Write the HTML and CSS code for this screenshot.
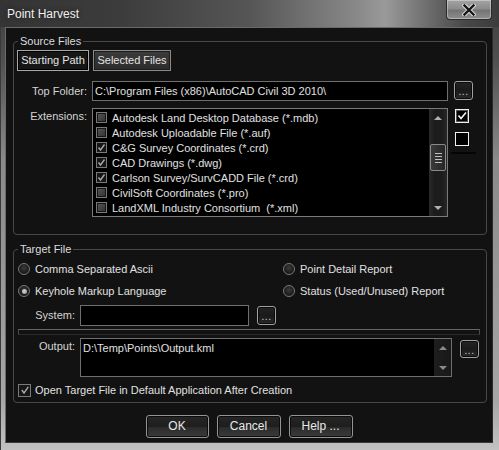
FILE: index.html
```html
<!DOCTYPE html>
<html>
<head>
<meta charset="utf-8">
<title>Point Harvest</title>
<link rel="stylesheet" href="styles.css">
</head>
<body>
<div class="window">
  <div class="titlebar">
    <span class="title">Point Harvest</span>
    <div class="close">
      <svg width="14" height="12" viewBox="0 0 14 12">
        <path d="M2.5 1.5 L11.5 10.5 M11.5 1.5 L2.5 10.5" stroke="#dcdcdc" stroke-width="4.4" stroke-linecap="square" fill="none"/>
        <path d="M2.5 1.5 L11.5 10.5 M11.5 1.5 L2.5 10.5" stroke="#151515" stroke-width="2.4" stroke-linecap="square" fill="none"/>
      </svg>
    </div>
  </div>
  <div class="client">
    <div class="group source">
      <div class="legend">Source Files</div>
      <div class="tabs">
        <div class="tab active">Starting Path</div>
        <div class="tab">Selected Files</div>
      </div>
      <div class="row folder-row">
        <div class="label">Top Folder:</div>
        <div class="textbox folder">C:\Program Files (x86)\AutoCAD Civil 3D 2010\</div>
        <div class="browse">...</div>
      </div>
      <div class="row ext-row">
        <div class="label ext-label">Extensions:</div>
        <div class="listbox">
          <div class="items">
            <div class="item"><span class="cb"></span>Autodesk Land Desktop Database (*.mdb)</div>
            <div class="item"><span class="cb"></span>Autodesk Uploadable File (*.auf)</div>
            <div class="item"><span class="cb on"><svg width="9" height="9" viewBox="0 0 9 9"><path d="M1.5 4.5 L3.5 7 L7.5 1.5" stroke="#a8a8a8" stroke-width="1.4" fill="none"/></svg></span>C&amp;G Survey Coordinates (*.crd)</div>
            <div class="item"><span class="cb on"><svg width="9" height="9" viewBox="0 0 9 9"><path d="M1.5 4.5 L3.5 7 L7.5 1.5" stroke="#a8a8a8" stroke-width="1.4" fill="none"/></svg></span>CAD Drawings (*.dwg)</div>
            <div class="item"><span class="cb on"><svg width="9" height="9" viewBox="0 0 9 9"><path d="M1.5 4.5 L3.5 7 L7.5 1.5" stroke="#a8a8a8" stroke-width="1.4" fill="none"/></svg></span>Carlson Survey/SurvCADD File (*.crd)</div>
            <div class="item"><span class="cb"></span>CivilSoft Coordinates (*.pro)</div>
            <div class="item"><span class="cb"></span>LandXML Industry Consortium&nbsp; (*.xml)</div>
          </div>
          <div class="vscroll">
            <div class="arrowbox"><span class="arrow up"></span></div>
            <div class="thumb"><i></i><i></i><i></i><i></i></div>
            <div class="spacer"></div>
            <div class="arrowbox"><span class="arrow down"></span></div>
          </div>
        </div>
        <div class="side">
          <div class="bigcb"><svg width="12" height="12" viewBox="0 0 12 12"><path d="M2.5 5.5 L5 8.5 L10 2.5" stroke="#f4f4f4" stroke-width="1.6" fill="none"/></svg></div>
          <div class="bigcb second"></div>
          <div class="sideline"></div>
        </div>
      </div>
    </div>

    <div class="group target">
      <div class="legend">Target File</div>
      <div class="radios">
        <div class="opt"><span class="radio"></span>Comma Separated Ascii</div>
        <div class="opt"><span class="radio"></span>Point Detail Report</div>
        <div class="opt"><span class="radio sel"><i></i></span>Keyhole Markup Language</div>
        <div class="opt"><span class="radio"></span>Status (Used/Unused) Report</div>
      </div>
      <div class="row system-row">
        <div class="label short">System:</div>
        <div class="textbox system"></div>
        <div class="browse sys-browse">...</div>
      </div>
      <div class="separator"></div>
      <div class="row output-row">
        <div class="label short out-label">Output:</div>
        <div class="textarea">
          <div class="ta-text">D:\Temp\Points\Output.kml</div>
          <div class="vscroll small">
            <div class="arrowbox"><span class="arrow up dim"></span></div>
            <div class="arrowbox"><span class="arrow down dim"></span></div>
          </div>
        </div>
        <div class="browse out-browse">...</div>
      </div>
      <div class="check-row">
        <span class="cb big on"><svg width="10" height="10" viewBox="0 0 10 10"><path d="M1.8 5 L4 8 L8.3 1.8" stroke="#a8a8a8" stroke-width="1.4" fill="none"/></svg></span>Open Target File in Default Application After Creation
      </div>
    </div>

    <div class="buttons">
      <div class="btn ok">OK</div>
      <div class="btn">Cancel</div>
      <div class="btn">Help ...</div>
    </div>
  </div>
</div>
</body>
</html>
```

FILE: styles.css
```css
* { box-sizing: border-box; }
html, body { margin: 0; padding: 0; }
body {
  width: 499px;
  height: 450px;
  overflow: hidden;
  background: #9a9a9a;
  font-family: "Liberation Sans", Arial, sans-serif;
  font-size: 11px;
  color: #dcdcdc;
}
.window {
  width: 499px;
  height: 450px;
  display: flex;
  flex-direction: column;
  border-left: 1px solid #3a3a3a;
  background: linear-gradient(to bottom, #3c3c3c 0px, #505050 60px, #8a8a8a 160px, #a6a6a6 400px, #c2c2c2 450px);
}
.titlebar {
  height: 27px;
  flex: none;
  display: flex;
  align-items: flex-start;
  margin-left: -1px;
  background: linear-gradient(to right, #343434 0px, #3c3c3c 120px, #565656 250px, #8a8a8a 360px, #9a9a9a 385px, #707070 425px, #484848 465px, #3c3c3c 499px);
}
.title {
  padding-left: 7px;
  line-height: 28px;
  font-size: 12px;
  color: #f0f0f0;
  text-shadow: 0 0 4px rgba(0,0,0,0.5);
}
.close {
  margin-left: auto;
  margin-right: 7px;
  width: 46px;
  height: 20px;
  border: 1px solid #2a2a2a;
  border-top: none;
  border-radius: 0 0 4px 4px;
  background: linear-gradient(to bottom, #a4a4a4 0%, #8c8c8c 45%, #747474 55%, #8e8e8e 100%);
  box-shadow: inset 0 0 0 1px rgba(255,255,255,0.35);
  display: flex;
  align-items: center;
  justify-content: center;
  padding-top: 1px;
}
.client {
  flex: none;
  margin: 0 6px 0 4px;
  height: 416px;
  border: 1px solid #6a6a6a;
  border-right-color: #2a2a2a;
  border-bottom-color: #3a3a3a;
  background: #121212;
  display: flex;
  flex-direction: column;
}
.group {
  border: 1px solid #484848;
  border-radius: 4px;
  margin: 0 5px 0 7px;
}
.source { margin-top: 13px; padding-bottom: 17px; }
.target { margin-top: 14px; padding-bottom: 3px; }
.legend {
  margin: -8px 0 0 4px;
  padding: 0 2px;
  width: max-content;
  background: #121212;
  line-height: 15px;
  color: #dcdcdc;
}
.tabs {
  display: flex;
  gap: 4px;
  margin: 1px 0 0 3px;
}
.tab {
  height: 21px;
  line-height: 19px;
  text-align: center;
  border: 1px solid #8a8a8a;
  background: linear-gradient(to bottom, #3c3c3c, #2c2c2c);
  box-shadow: inset 0 0 0 1px #1c1c1c;
  width: 78px;
  color: #e4e4e4;
}
.tab.active {
  width: 72px;
  border-color: #a8a8a8;
  background: #161616;
  box-shadow: inset 0 0 0 1px #000;
}
.row { display: flex; align-items: flex-start; }
.label {
  flex: none;
  width: 73px;
  text-align: right;
  color: #d4d4d4;
  line-height: 20px;
}
.label.short { width: 61px; }
.folder-row { margin-top: 10px; }
.textbox {
  flex: none;
  margin-left: 5px;
  height: 20px;
  border: 1px solid #6e6e6e;
  background: #000;
  padding-left: 2px;
  line-height: 18px;
  color: #e0e0e0;
  white-space: nowrap;
  overflow: hidden;
}
.textbox.folder { width: 356px; }
.browse {
  flex: none;
  margin-left: 6px;
  width: 19px;
  height: 19px;
  border: 1px solid #a0a0a0;
  border-radius: 3px;
  background: linear-gradient(to bottom, #242424, #1a1a1a 50%, #2a2a2a);
  box-shadow: inset 0 0 0 1px #0a0a0a;
  color: #d0d0d0;
  font-size: 10px;
  line-height: 20px;
  text-align: center;
  letter-spacing: 0.5px;
}
.ext-row { margin-top: 7px; }
.ext-label { line-height: 17px; }
.listbox {
  flex: none;
  margin-left: 5px;
  width: 356px;
  height: 109px;
  border: 1px solid #7a7a7a;
  background: #000;
  display: flex;
}
.items {
  flex: 1;
  padding-top: 1px;
}
.item {
  height: 15px;
  display: flex;
  align-items: center;
  padding-left: 3px;
  white-space: nowrap;
  color: #e0e0e0;
}
.cb {
  flex: none;
  width: 11px;
  height: 11px;
  margin-right: 5px;
  border: 1px solid #7a7a7a;
  background: #161616;
  display: flex;
  align-items: center;
  justify-content: center;
}
.cb:not(.on)::after {
  content: "";
  width: 7px;
  height: 7px;
  background: linear-gradient(to bottom right, #555, #333);
}
.cb.big { width: 13px; height: 13px; margin-right: 4px; }
.vscroll {
  flex: none;
  width: 18px;
  display: flex;
  flex-direction: column;
  background: linear-gradient(to right, #2a2a2a, #1c1c1c 30%, #1c1c1c 70%, #262626);
}
.arrowbox {
  height: 17px;
  display: flex;
  align-items: center;
  justify-content: center;
}
.arrow {
  width: 0;
  height: 0;
  border-left: 4px solid transparent;
  border-right: 4px solid transparent;
}
.arrow.up { border-bottom: 4px solid #b0b0b0; }
.arrow.down { border-top: 4px solid #b0b0b0; }
.arrow.dim.up { border-bottom-color: #8a8a8a; }
.arrow.dim.down { border-top-color: #8a8a8a; }
.thumb {
  margin: 18px 1px 0 1px;
  height: 27px;
  border: 1px solid #8a8a8a;
  border-radius: 2px;
  background: linear-gradient(to right, #3a3a3a, #262626);
  display: flex;
  flex-direction: column;
  align-items: center;
  justify-content: center;
  gap: 2px;
}
.thumb i {
  display: block;
  width: 7px;
  height: 1px;
  background: #c0c0c0;
}
.spacer { flex: 1; }
.side {
  flex: none;
  margin-left: 3px;
  width: 25px;
}
.bigcb {
  margin: 1px 0 0 4px;
  width: 14px;
  height: 14px;
  border: 1px solid #f0f0f0;
  box-shadow: inset 0 0 0 1px #555;
  background: #000;
  display: flex;
  align-items: center;
  justify-content: center;
}
.bigcb.second { margin-top: 9px; box-shadow: none; }
.sideline {
  margin-top: 6px;
  height: 2px;
  background: #050505;
}
.radios {
  margin-top: 1px;
  display: grid;
  grid-template-columns: 269px 1fr;
}
.opt {
  height: 22px;
  display: flex;
  align-items: center;
  padding-left: 4px;
  color: #e0e0e0;
  white-space: nowrap;
}
.opt:nth-child(even) { padding-left: 0; }
.radio {
  flex: none;
  width: 12px;
  height: 12px;
  margin-right: 5px;
  border-radius: 50%;
  border: 1px solid #7a7a7a;
  background: radial-gradient(circle at 50% 40%, #3c3c3c, #181818 70%);
  display: flex;
  align-items: center;
  justify-content: center;
}
.radio i {
  display: block;
  width: 5px;
  height: 5px;
  border-radius: 50%;
  background: radial-gradient(circle at 40% 35%, #d8d8d8, #8a8a8a);
}
.system-row { margin-top: 3px; }
.textbox.system { width: 169px; height: 21px; }
.sys-browse { margin-left: 8px; margin-top: 1px; }
.separator {
  margin: 3px 6px 0 4px;
  height: 6px;
  border: 1px solid #4a4a4a;
  border-top-color: #666;
  border-bottom-color: #2a2a2a;
}
.output-row { margin-top: 3px; }
.out-label { line-height: 16px; }
.textarea {
  flex: none;
  margin-left: 5px;
  width: 372px;
  height: 39px;
  border: 1px solid #6e6e6e;
  background: #000;
  display: flex;
}
.ta-text {
  flex: 1;
  padding: 2px 0 0 2px;
  line-height: 15px;
  color: #e0e0e0;
}
.vscroll.small {
  width: 17px;
  justify-content: space-between;
  background: linear-gradient(to right, #1e1e1e, #181818);
}
.out-browse { margin-left: 8px; margin-top: 2px; height: 18px; line-height: 19px; }
.check-row {
  margin-top: 4px;
  height: 18px;
  display: flex;
  align-items: center;
  padding-left: 4px;
  color: #e0e0e0;
  white-space: nowrap;
}
.buttons {
  margin-top: 12px;
  display: flex;
  justify-content: center;
  gap: 8px;
}
.btn {
  width: 64px;
  height: 23px;
  border: 1px solid #949494;
  border-radius: 3px;
  background: linear-gradient(to bottom, #262626 0%, #1e1e1e 50%, #2c2c2c 55%, #3a3a3a 100%);
  box-shadow: inset 0 0 0 1px #0c0c0c;
  text-align: center;
  line-height: 21px;
  font-size: 12px;
  color: #e8e8e8;
}
.btn.ok { width: 63px; }
```
